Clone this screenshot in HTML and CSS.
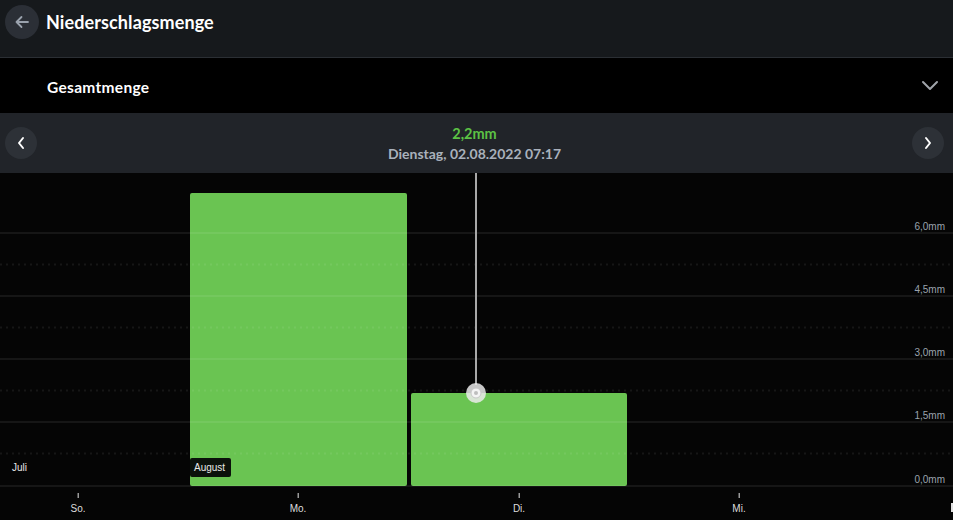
FILE: index.html
```html
<!DOCTYPE html>
<html lang="de">
<head>
<meta charset="utf-8">
<title>Niederschlagsmenge</title>
<link rel="stylesheet" href="styles.css">
</head>
<body>
<header class="topbar">
  <div class="topbar-row">
    <button class="round-btn back-btn" aria-label="Zurück">
      <svg width="16" height="14" viewBox="0 0 16 14"><path d="M14 7H2.5M7.5 2L2.5 7l5 5" fill="none" stroke="#9aa2ad" stroke-width="1.8" stroke-linecap="round" stroke-linejoin="round"/></svg>
    </button>
    <h1 class="title">Niederschlagsmenge</h1>
  </div>
</header>
<section class="selector">
  <span class="selector-label">Gesamtmenge</span>
  <svg class="chevron" width="18" height="11" viewBox="0 0 18 11"><path d="M2 2l7 7 7-7" fill="none" stroke="#a0a4aa" stroke-width="2" stroke-linecap="round" stroke-linejoin="round"/></svg>
</section>
<nav class="navbar">
  <button class="round-btn nav-btn" aria-label="Zurück">
    <svg width="10" height="14" viewBox="0 0 10 14"><path d="M7 2L3 7l4 5" fill="none" stroke="#fff" stroke-width="2" stroke-linecap="round" stroke-linejoin="round"/></svg>
  </button>
  <div class="nav-info">
    <div class="nav-value">2,2mm</div>
    <div class="nav-date">Dienstag, 02.08.2022 07:17</div>
  </div>
  <button class="round-btn nav-btn" aria-label="Weiter">
    <svg width="10" height="14" viewBox="0 0 10 14"><path d="M3 2l4 5-4 5" fill="none" stroke="#fff" stroke-width="2" stroke-linecap="round" stroke-linejoin="round"/></svg>
  </button>
</nav>
<div class="chart">
  <svg class="chart-svg" width="953" height="347" viewBox="0 0 953 347">
    <rect x="190" y="20" width="217" height="293" rx="2" fill="#6ac452"/>
    <rect x="411" y="220" width="216" height="93" rx="2" fill="#6ac452"/>
    <g stroke="rgba(255,255,255,0.07)" stroke-width="2">
      <line x1="0" y1="60" x2="953" y2="60"/>
      <line x1="0" y1="123" x2="953" y2="123"/>
      <line x1="0" y1="186" x2="953" y2="186"/>
      <line x1="0" y1="249" x2="953" y2="249"/>
      <line x1="0" y1="313" x2="953" y2="313"/>
    </g>
    <g stroke="rgba(255,255,255,0.07)" stroke-width="2" stroke-dasharray="2 4">
      <line x1="0" y1="91.5" x2="953" y2="91.5"/>
      <line x1="0" y1="154.5" x2="953" y2="154.5"/>
      <line x1="0" y1="217.5" x2="953" y2="217.5"/>
      <line x1="0" y1="280.5" x2="953" y2="280.5"/>
    </g>
    <g class="y-labels" text-anchor="end">
      <text x="945" y="57">6,0mm</text>
      <text x="945" y="120">4,5mm</text>
      <text x="945" y="183">3,0mm</text>
      <text x="945" y="246">1,5mm</text>
      <text x="945" y="310">0,0mm</text>
    </g>
    <line x1="476" y1="0" x2="476" y2="212" stroke="#a8a8a8" stroke-width="2"/>
    <circle cx="476" cy="220" r="10" fill="rgba(235,235,235,0.85)"/>
    <circle cx="476" cy="220" r="5" fill="#f4f4f4" stroke="#c8c8c8" stroke-width="1"/>
    <circle cx="476" cy="220" r="2" fill="#bdbdbd"/>
    <text class="month" x="12" y="298">Juli</text>
    <rect x="190" y="285" width="41" height="19" rx="2" fill="#0b110b"/>
    <text class="month" x="194" y="298">August</text>
    <g fill="#9a9a9a">
      <rect x="77.5" y="320" width="1.5" height="5"/>
      <rect x="297.5" y="320" width="1.5" height="5"/>
      <rect x="518.5" y="320" width="1.5" height="5"/>
      <rect x="738.5" y="320" width="1.5" height="5"/>
      <rect x="951" y="330" width="2" height="9" fill="#e0e0e0"/>
    </g>
    <g class="x-labels" text-anchor="middle">
      <text x="78" y="339">So.</text>
      <text x="298" y="339">Mo.</text>
      <text x="519" y="339">Di.</text>
      <text x="739" y="339">Mi.</text>
    </g>
  </svg>
</div>
</body>
</html>
```
FILE: styles.css
```css
* { box-sizing: border-box; }
html, body {
  margin: 0;
  padding: 0;
  background: #050505;
  font-family: Lato, "Noto Sans", sans-serif;
  color: #fff;
  overflow: hidden;
}
.topbar {
  height: 58px;
  background: #16191c;
  border-bottom: 1px solid #2b2f34;
}
.topbar-row {
  display: flex;
  align-items: center;
  padding: 5px 5px;
  gap: 7px;
}
.round-btn {
  display: flex;
  align-items: center;
  justify-content: center;
  border: 0;
  padding: 0;
  border-radius: 50%;
  cursor: pointer;
}
.back-btn {
  width: 34px;
  height: 34px;
  background: #2b2f36;
}
.title {
  margin: 0;
  font-size: 18px;
  font-weight: 700;
  letter-spacing: 0.1px;
  color: #fff;
}
.selector {
  height: 55px;
  background: #000;
  display: flex;
  align-items: center;
  justify-content: space-between;
  padding: 0 14px 0 47px;
}
.selector-label {
  font-size: 15.5px;
  font-weight: 700;
  letter-spacing: 0.3px;
  padding-top: 2px;
}
.navbar {
  height: 60px;
  background: #212429;
  display: flex;
  align-items: center;
  justify-content: space-between;
  padding: 0 9px 0 5px;
}
.nav-btn {
  width: 32px;
  height: 32px;
  background: #2d3137;
}
.nav-info {
  display: flex;
  flex-direction: column;
  align-items: center;
  gap: 3px;
  padding-top: 1px;
}
.nav-value {
  color: #5cc245;
  font-size: 14.5px;
  font-weight: 700;
}
.nav-date {
  color: #a9b1bc;
  font-size: 14px;
  font-weight: 700;
}
.chart {
  height: 347px;
  background: #050505;
}
.chart-svg {
  display: block;
}
.y-labels text {
  font-family: "Liberation Sans", Arial, sans-serif;
  font-size: 10px;
  fill: #9aa3ad;
}
.x-labels text {
  font-family: "Liberation Sans", Arial, sans-serif;
  font-size: 10px;
  fill: #dddddd;
}
.month {
  font-family: "Liberation Sans", Arial, sans-serif;
  font-size: 10px;
  fill: #e8e8e8;
}
```
